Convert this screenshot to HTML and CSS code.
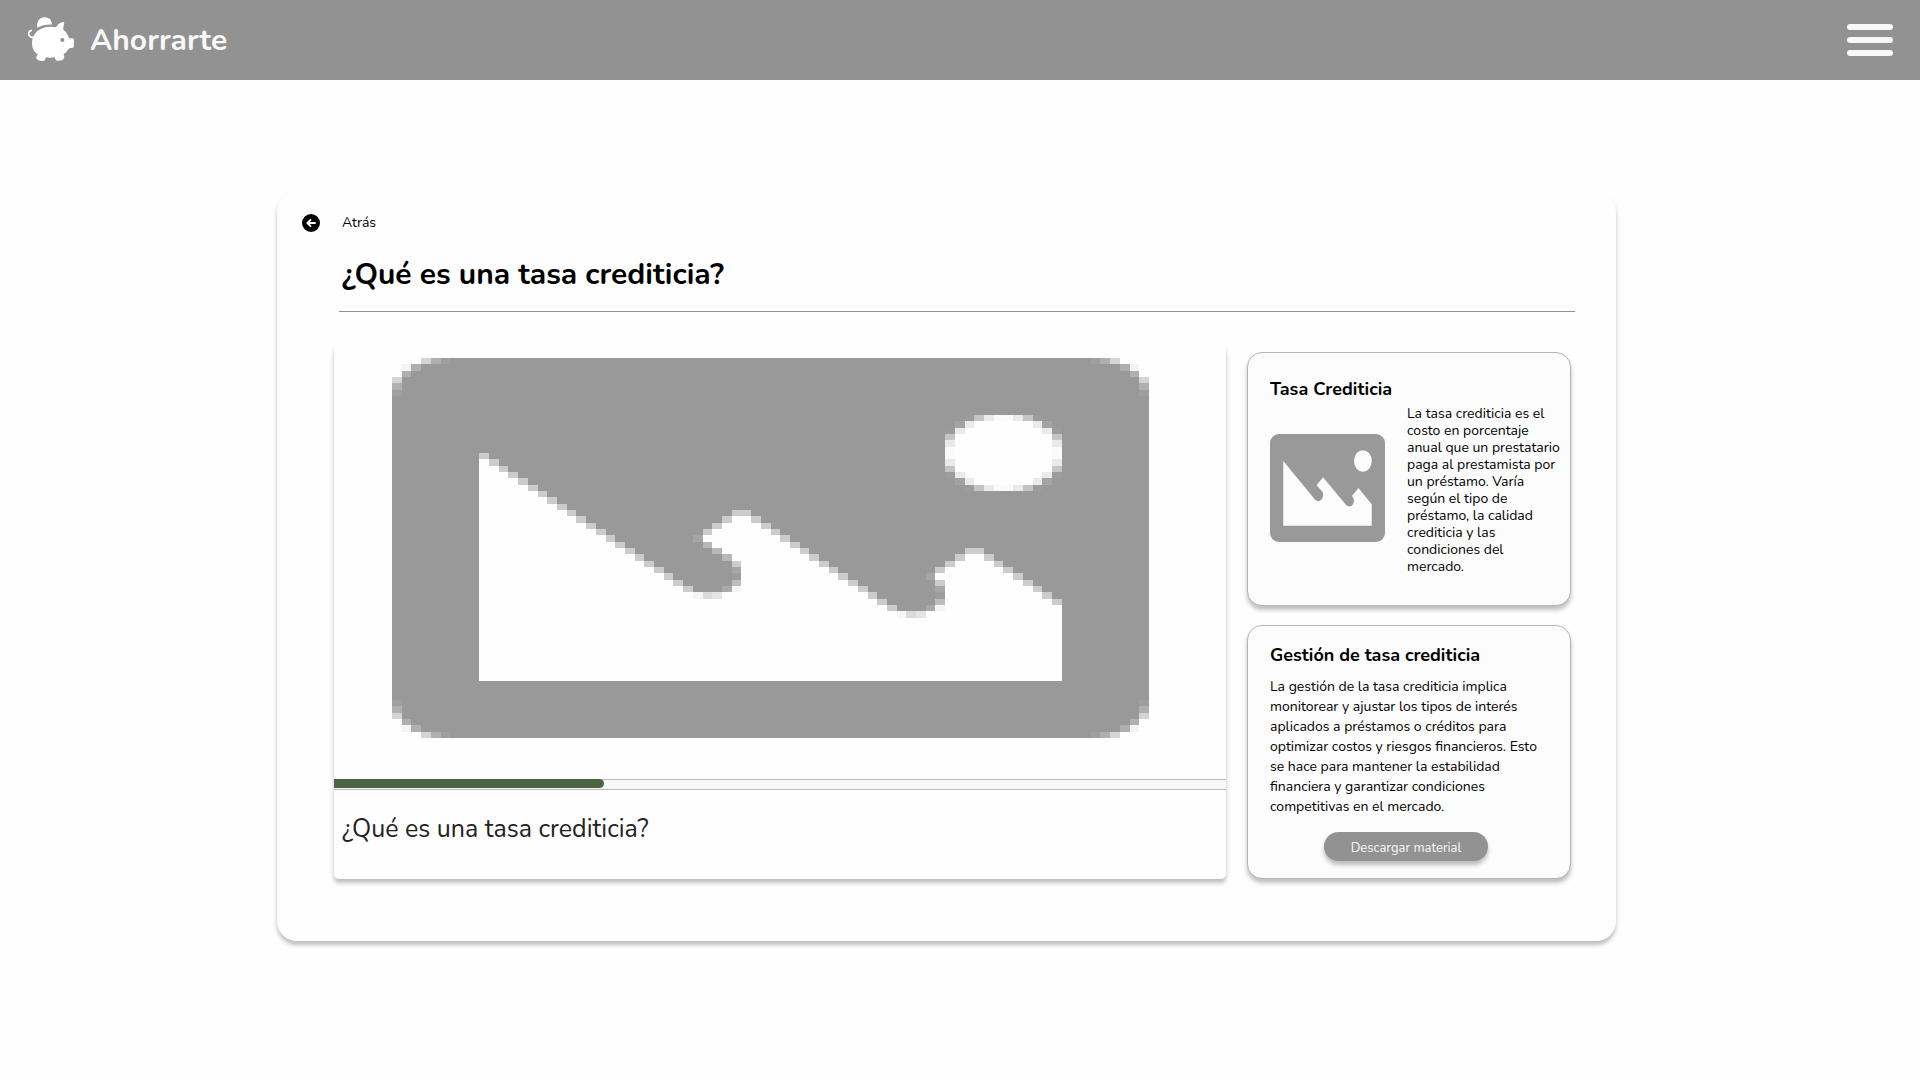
FILE: index.html
```html
<!DOCTYPE html>
<html lang="es">
<head>
  <meta charset="utf-8">
  <meta name="viewport" content="width=device-width, initial-scale=1">
  <title>Ahorrarte</title>
  <link rel="stylesheet" href="styles.css">
</head>
<body>
  <header class="topbar">
    <a class="brand" href="#">
      <svg class="brand-icon" viewBox="0 0 138 132" aria-hidden="true">
        <path fill="#fff" d="M28 32 C25 15 34 1 50 1 C65 1 72 12 72 23 C56 22 41 25 28 32Z"/>
        <path fill="none" stroke="#fff" stroke-width="5" stroke-linecap="round" d="M10 40 C1 42 0 52 5 57 C8 61 12 62 16 60"/>
        <path fill="#fff" fill-rule="evenodd" d="M12 80 C11 50 34 29 68 29 C74 29 79 30 84 31 C89 22 98 15 106 15 C109 15 109 18 108 21 C107 27 105 32 106 38 C114 44 120 52 123 63 C126 65 129 64 133 64 C136 64 138 66 138 70 V86 C138 90 136 92 132 93 C126 93 123 94 121 97 C117 104 112 108 106 112 C108 116 110 119 108 124 C104 131 95 132 87 131 C83 130 81 126 81 121 C73 123 62 123 53 121 C53 126 51 130 47 131 C40 133 31 131 26 126 C23 122 27 117 29 112 C19 106 13 96 12 80Z M103 63 a6 6 0 1 0 0.1 0Z"/>
      </svg>
      <span>Ahorrarte</span>
    </a>
    <button class="menu" type="button" aria-label="Menú">
      <span class="menu-bar"></span><span class="menu-bar"></span><span class="menu-bar"></span>
    </button>
  </header>

  <main class="page">
    <section class="panel">
      <a class="back" href="#">
        <svg class="back-icon" viewBox="0 0 18 18" aria-hidden="true">
          <circle cx="9" cy="9" r="9"/>
          <path d="M13 9H5.500M8.500 5.900L5.400 9l3.100 3.100" fill="none" stroke="#fff" stroke-width="1.900" stroke-linecap="round" stroke-linejoin="round"/>
        </svg>
        <span>Atrás</span>
      </a>
      <h1 class="title">¿Qué es una tasa crediticia?</h1>

      <div class="content">
        <article class="video">
          <svg class="video-picture" viewBox="0 0 78 60" preserveAspectRatio="none" shape-rendering="crispEdges" role="img" aria-label="Imagen del video">
            <defs>
              <g id="corner">
                <path fill="#fefefe" d="M0 0h3v1h-2v1h-1v1h-1z M0 0h1v3h-1z"/>
                <path fill="#f4f4f4" d="M1 1h1v1h-1z"/>
                <path fill="#d4d4d4" d="M3 0h1v1h-1z M0 3h1v1h-1z"/>
                <path fill="#afafaf" d="M4 0h1v1h-1z M2 1h1v1h-1z M1 2h1v1h-1z M0 4h1v1h-1z"/>
                <path fill="#9f9f9f" d="M5 0h1v1h-1z M0 5h1v1h-1z"/>
              </g>
              <g id="sun-quarter">
                <path fill="#fefefe" d="M0 6V5H1V3H2V2H3V1H5V0H6V6Z"/>
                <path fill="#fafafa" d="M5 0h1v1h-1z M0 5h1v1h-1z"/>
                <path fill="#eaeaea" d="M4 0h1v1h-1z M2 1h1v1h-1z M1 2h1v1h-1z M0 4h1v1h-1z"/>
                <path fill="#c4c4c4" d="M3 0h1v1h-1z M0 3h1v1h-1z"/>
                <path fill="#a3a3a3" d="M1 1h1v1h-1z"/>
                <path fill="#9c9c9c" d="M2 0h1v1h-1z M0 2h1v1h-1z"/>
              </g>
              <g id="bump">
                <path fill="#999999" d="M0 0h3v1h-3z"/>
                <path fill="#f5f5f5" d="M0 1h1v1h-1z M4 0h1v1h-1z"/>
                <path fill="#dadada" d="M1 1h1v1h-1z"/>
                <path fill="#e4e4e4" d="M2 1h1v1h-1z"/>
                <path fill="#aaaaaa" d="M3 0h1v1h-1z"/>
                <path fill="#bdbdbd" d="M4 -1h1v1h-1z"/>
                <path fill="#9d9d9d" d="M4 -2h1v1h-1z"/>
                <path fill="#a6a6a6" d="M4 -3h1v1h-1z"/>
                <path fill="#cccccc" d="M4 -4h1v1h-1z"/>
              </g>
            </defs>
            <path fill="#999" d="M0 0h78v60h-78z"/>
            <use href="#corner"/>
            <use href="#corner" transform="matrix(-1 0 0 1 78 0)"/>
            <use href="#corner" transform="matrix(1 0 0 -1 0 60)"/>
            <use href="#corner" transform="matrix(-1 0 0 -1 78 60)"/>
            <!-- snowy ridge, one step per cell -->
            <path fill="#fefefe" d="M9 51V15H10V16H11V17H12V18H13V19H14V20H15V21H16V22H17V23H18V24H19V25H20V26H21V27H22V28H23V29H24V30H25V31H26V32H27V33H28V34H29V35H30V36H31V37H35V36H36V32H35V31H34V30H33V29H32V27H33V26H34V25H35V24H37V25H38V26H39V27H40V28H41V29H42V30H43V31H44V32H45V33H46V34H47V35H48V36H49V37H50V38H51V39H52V40H56V39H57V35H56V33H57V32H58V31H59V30H61V31H62V32H63V33H64V34H65V35H66V36H67V37H68V38H69V51Z"/>
            <path fill="#cccccc" d="M9 15H10V16H11V17H12V18H13V19H14V20H15V21H16V22H17V23H18V24H19V25H20V26H21V27H22V28H23V29H24V30H25V31H26V32H27V33H28V34H29V35H30V36H31V37H30V36H29V35H28V34H27V33H26V32H25V31H24V30H23V29H22V28H21V27H20V26H19V25H18V24H17V23H16V22H15V21H14V20H13V19H12V18H11V17H10V16H9Z"/>
            <path fill="#cccccc" d="M32 27h1v1h-1z M33 26h1v1h-1z M34 25h1v1h-1z M35 24h2v1h-2z"/>
            <path fill="#cccccc" d="M37 25H38V26H39V27H40V28H41V29H42V30H43V31H44V32H45V33H46V34H47V35H48V36H49V37H50V38H51V39H52V40H51V39H50V38H49V37H48V36H47V35H46V34H45V33H44V32H43V31H42V30H41V29H40V28H39V27H38V26H37Z"/>
            <path fill="#cccccc" d="M56 33h1v1h-1z M57 32h1v1h-1z M58 31h1v1h-1z M59 30h2v1h-2z"/>
            <path fill="#cccccc" d="M61 31H62V32H63V33H64V34H65V35H66V36H67V37H68V38H69V39H68V38H67V37H66V36H65V35H64V34H63V33H62V32H61Z"/>
            <path fill="#a6a6a6" d="M31 28h1v1h-1z M55 34h1v1h-1z"/>
            <path fill="#fefefe" d="M56 34h1v1h-1z"/>
            <path fill="#b8b8b8" d="M32 29h1v1h-1z M33 30h1v1h-1z M34 31h1v1h-1z"/>
            <use href="#bump" x="31" y="36"/>
            <use href="#bump" x="52" y="39"/>
            <use href="#sun-quarter" transform="translate(57 9)"/>
            <use href="#sun-quarter" transform="matrix(-1 0 0 1 69 9)"/>
            <use href="#sun-quarter" transform="matrix(1 0 0 -1 57 21)"/>
            <use href="#sun-quarter" transform="matrix(-1 0 0 -1 69 21)"/>
          </svg>
          <progress class="video-progress" value="303" max="1000" aria-label="Progreso del video"></progress>
          <h2 class="video-title">¿Qué es una tasa crediticia?</h2>
        </article>

        <aside class="side">
          <article class="card card-rate">
            <h2 class="card-title">Tasa Crediticia</h2>
            <div class="card-row">
              <svg class="card-picture" viewBox="0 0 78 60" preserveAspectRatio="none" role="img" aria-label="Imagen">
                <rect width="78" height="60" rx="6" ry="5" fill="#999"/>
                <path fill="#fcfcfc" d="M9 15L30.600 36.500C32.500 38 35 37.300 35.800 35C36.300 33.500 36 32.500 35 31.500L31.600 28.500L36 24L51.600 39.500C53.500 41 56 40.300 56.800 38C57 37 57 36 56 35L55.600 34.400L60 30L69 39V51H9Z"/>
                <ellipse cx="63" cy="15" rx="6" ry="6" fill="#fcfcfc"/>
              </svg>
              <p class="card-text card-text-tight">La tasa crediticia es el costo en porcentaje anual que un prestatario paga al prestamista por un préstamo. Varía según el tipo de préstamo, la calidad crediticia y las condiciones del mercado.</p>
            </div>
          </article>
          <article class="card card-manage">
            <h2 class="card-title">Gestión de tasa crediticia</h2>
            <p class="card-text">La gestión de la tasa crediticia implica monitorear y ajustar los tipos de interés aplicados a préstamos o créditos para optimizar costos y riesgos financieros. Esto se hace para mantener la estabilidad financiera y garantizar condiciones competitivas en el mercado.</p>
            <button class="download" type="button">Descargar material</button>
          </article>
        </aside>
      </div>
    </section>
  </main>
</body>
</html>
```
FILE: styles.css
```css
* { box-sizing: border-box; }

body {
  margin: 0;
  background: #fefefe;
  color: #000;
  font-family: "Nunito", "Lato", sans-serif;
  font-size: 14px;
}

h1, h2, p { margin: 0; }
a { color: inherit; text-decoration: none; }
button { border: 0; padding: 0; font: inherit; cursor: pointer; }

.topbar {
  display: flex;
  align-items: center;
  justify-content: space-between;
  height: 80px;
  padding: 0 27px 0 28px;
  background: #929292;
}

.brand {
  display: flex;
  align-items: center;
  gap: 16px;
  padding-top: 2px;
  color: #f8f8f8;
  font-size: 30px;
  font-weight: 700;
  line-height: 40px;
}

.brand-icon { width: 46px; height: 44px; margin-bottom: 4px; }

.menu {
  display: flex;
  flex-direction: column;
  gap: 7px;
  width: 46px;
  background: none;
}

.menu-bar { height: 6px; border-radius: 3px; background: #f8f8f8; }

.page {
  display: grid;
  grid-template-columns: 277fr 1339fr 304fr;
  padding: 112px 0;
}

.panel {
  grid-column: 2;
  padding: 21px 41px 62px 25px;
  border-radius: 20px;
  background: #fefefe;
  box-shadow: 0 4px 4px rgba(0, 0, 0, 0.25);
}

.back {
  display: flex;
  align-items: center;
  gap: 22px;
  line-height: 20px;
  width: max-content;
}

.back-icon { width: 18px; height: 18px; }

.title {
  margin-left: 37px;
  padding: 22px 3px 16px;
  border-bottom: 1px solid #929292;
  font-size: 30px;
  font-weight: 700;
  line-height: 40px;
}

.content {
  display: grid;
  grid-template-columns: 892fr 324fr;
  gap: 21px;
  margin: 33px 4px 0 32px;
}

.video {
  display: flex;
  flex-direction: column;
  border-radius: 5px;
  background: #fefefe;
  box-shadow: 0 4px 4px rgba(0, 0, 0, 0.25);
}

.video-picture {
  display: block;
  width: calc(100% - 135px);
  height: 380px;
  margin: 13px 0 41px 58px;
}

.video-progress {
  display: block;
  width: 100%;
  height: 11px;
  border: 0;
  appearance: none;
}

.video-progress::-webkit-progress-bar {
  border: solid #bbb;
  border-width: 1px 0;
  background: #f8f8f8;
}

.video-progress::-webkit-progress-value {
  height: 11px;
  margin-top: -1px;
  border-radius: 0 5px 5px 0;
  background: #4c6441;
}

.video-title {
  padding: 21px 8px 32px;
  color: #222;
  font-size: 25px;
  font-weight: 400;
  line-height: 36px;
}

.side {
  display: flex;
  flex-direction: column;
  gap: 19px;
  padding-top: 7px;
}

.card {
  min-height: 254px;
  padding: 0 8px 0 22px;
  border: 1px solid #b5b5b5;
  border-radius: 15px;
  background: #fcfcfc;
  box-shadow: 0 4px 4px rgba(0, 0, 0, 0.25);
}

.card-rate { padding-top: 24px; }
.card-manage { padding-top: 17px; }

.card-title {
  font-size: 18px;
  font-weight: 700;
  line-height: 24px;
}

.card-row {
  display: flex;
  align-items: center;
  gap: 22px;
}

.card-picture { flex: none; width: 115px; height: 108px; }

.card-text { margin-top: 10px; padding-right: 20px; line-height: 20px; }

.card-text-tight { margin-top: 4px; padding-right: 0; line-height: 17px; }

.download {
  display: block;
  width: 164px;
  height: 29px;
  margin: 15px auto 0 54px;
  padding-top: 2px;
  border-radius: 15px;
  background: #929292;
  box-shadow: 0 4px 4px rgba(0, 0, 0, 0.25);
  color: #f8f8f8;
  font-size: 13px;
}
```
